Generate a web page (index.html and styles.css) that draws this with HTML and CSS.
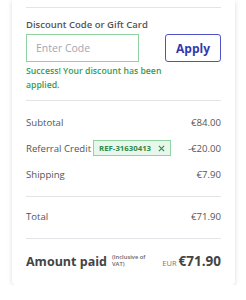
FILE: index.html
```html
<!DOCTYPE html>
<html>
<head>
<meta charset="utf-8">
<link rel="stylesheet" href="styles.css">
</head>
<body>
<div class="card">
  <hr class="divider">
  <div class="discount">
    <label class="label">Discount Code or Gift Card</label>
    <div class="code-row">
      <div class="input">Enter Code</div>
      <button class="apply">Apply</button>
    </div>
    <p class="success">Success! Your discount has been applied.</p>
  </div>
  <hr class="divider">
  <div class="rows">
    <div class="row"><span>Subtotal</span><span>€84.00</span></div>
    <div class="row">
      <span class="ref-left">Referral Credit
        <span class="tag">REF-31630413
          <svg class="x" viewBox="0 0 8 8" width="7" height="7"><path d="M1 1L7 7M7 1L1 7" stroke="#2e8a4a" stroke-width="1.3" fill="none"/></svg>
        </span>
      </span>
      <span>-€20.00</span>
    </div>
    <div class="row"><span>Shipping</span><span>€7.90</span></div>
  </div>
  <hr class="divider">
  <div class="rows total">
    <div class="row"><span>Total</span><span>€71.90</span></div>
  </div>
  <hr class="divider">
  <div class="paid">
    <div class="paid-left">
      <span class="paid-label">Amount paid</span>
      <span class="vat">(Inclusive of VAT)</span>
    </div>
    <div class="paid-right">
      <span class="cur">EUR</span>
      <span class="paid-amount">€71.90</span>
    </div>
  </div>
</div>
</body>
</html>
```

FILE: styles.css
```css
* { box-sizing: border-box; }
body {
  margin: 0;
  background: #fff;
  font-family: "Open Sans", "Liberation Sans", sans-serif;
  color: #555;
}
.card {
  margin: 0 11px 0 12px;
  padding: 7px 14px 14px;
  background: #fff;
  border-radius: 0 0 4px 4px;
  box-shadow: 0 1px 5px rgba(0,0,0,0.14);
}
.divider {
  margin: 0;
  border: 0;
  border-top: 1px solid #e4e4e8;
}
.discount {
  padding: 10px 0 8px;
}
.label {
  display: block;
  font-size: 9.5px;
  line-height: 14px;
  font-weight: 600;
  color: #555;
  margin-bottom: 2px;
}
.code-row {
  display: flex;
  justify-content: space-between;
}
.input {
  width: 113px;
  height: 28px;
  border: 1px solid #8fd3a0;
  padding-left: 9px;
  font-size: 10.5px;
  line-height: 26px;
  color: #a3a6b3;
}
.apply {
  width: 56px;
  height: 28px;
  border: 1.5px solid #4d52c7;
  border-radius: 3px;
  background: #fff;
  color: #3338b0;
  font-family: inherit;
  font-size: 12px;
  font-weight: 700;
  padding: 0;
}
.success {
  margin: 2px 0 0;
  font-size: 8.7px;
  line-height: 14px;
  font-weight: 600;
  color: #2f9d51;
  width: 145px;
}
.rows {
  padding: 13px 0 14px;
  display: flex;
  flex-direction: column;
  gap: 10px;
}
.rows.total {
  padding: 11px 0 14px;
}
.row {
  display: flex;
  justify-content: space-between;
  align-items: center;
  height: 16px;
  font-size: 9.6px;
  color: #555;
}
.ref-left {
  display: flex;
  align-items: center;
  gap: 2px;
}
.tag {
  display: inline-flex;
  align-items: center;
  gap: 7px;
  height: 16px;
  padding: 0 5px 0 5px;
  background: #e8f7eb;
  border: 1px solid #8fd3a0;
  color: #2e8a4a;
  font-size: 7.8px;
  font-weight: 700;
}
.paid {
  display: flex;
  justify-content: space-between;
  align-items: center;
  height: 20px;
  margin-top: 12px;
}
.paid-left {
  display: flex;
  align-items: center;
  gap: 5px;
}
.paid-label {
  font-size: 12.5px;
  font-weight: 700;
  color: #444;
}
.vat {
  font-size: 5.8px;
  line-height: 7px;
  width: 42px;
  color: #666;
  font-weight: 600;
}
.paid-right {
  display: flex;
  align-items: baseline;
  gap: 2px;
}
.cur {
  font-size: 7.5px;
  color: #777;
}
.paid-amount {
  font-size: 13.5px;
  font-weight: 700;
  color: #444;
}
```
